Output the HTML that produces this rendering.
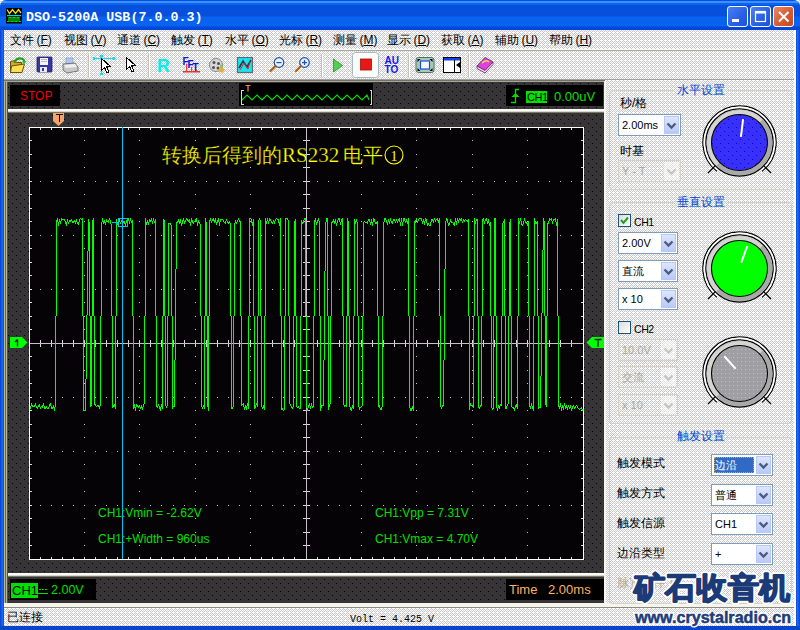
<!DOCTYPE html>
<html><head><meta charset="utf-8">
<style>
*{margin:0;padding:0;box-sizing:border-box}
html,body{width:800px;height:630px;overflow:hidden;background:#ebe8d6;font-family:"Liberation Sans",sans-serif;position:relative}
.a{position:absolute;white-space:nowrap}
svg{position:absolute;left:0;top:0}
#title{left:0;top:0;width:800px;height:30px;background:linear-gradient(#0a50e0 0px,#0a50e0 1px,#3c90ff 1px,#3c90ff 3px,#0a64f0 3px,#0a64f0 5px,#0650dc 5px,#0650dc 16px,#0a62f0 17px,#0a62f0 26px,#0446d8 27px,#0446d8 30px);border-radius:6px 6px 0 0}
.tt{font-family:"Liberation Mono",monospace;font-weight:bold;color:#fff;font-size:13.3px;left:26px;top:10px;letter-spacing:0.05px}
.wb{top:6px;width:21px;height:21px;border:1px solid #fff;border-radius:3px;background:linear-gradient(135deg,#4a80f0,#2a62e6 55%,#1c50d8)}
.menu{top:32px;font-size:12px;color:#000}
.menu u{text-underline-offset:1px}
.lbl{font-size:12px;color:#000}
.gtitle{font-size:12px;color:#0046d5}
.gbox{border:1px solid #d0d0bf;border-radius:5px}
.combo{background:#fff;border:1px solid #7f9db9}
.combo .bt{position:absolute;right:1px;top:1px;bottom:1px;width:15px;background:linear-gradient(#dde6fe,#b9c9f8);border:1px solid #b8c8f4}
.combo .tx{position:absolute;left:3px;top:4px;font-size:11px;color:#000}
.dis{border:1px solid #d4d2c6;background:transparent}
.dis .tx{color:#aca899}
.dis .bt{background:rgba(255,255,255,0.5);border-color:transparent}
.lbl2{font-size:10.5px;color:#000;letter-spacing:-0.4px;margin-top:1.5px}
.chk{width:13px;height:13px;border:1px solid #1c5180;background:linear-gradient(135deg,#dcdcd7,#fff)}
.chk svg{position:absolute;left:0;top:0}
.chv{position:absolute;left:-1px;top:0}
.dis .chv path{stroke:#c8c6bc}
.xchev{position:absolute;left:3px;top:6px;width:7px;height:7px;border-right:2px solid #4d6185;border-bottom:2px solid #4d6185;transform:rotate(45deg) scale(0.8);transform-origin:50% 50%;top:3px}
.sel{position:absolute;left:2px;top:2px;width:40px;height:16px;background:#316ac5;outline:1px dotted #f0a030;outline-offset:-1px}
.wm{font-size:31px;font-weight:900;color:#1a3a78;letter-spacing:0px;text-shadow:1px 1px 0 #fff,-1px -1px 0 #fff,1px -1px 0 #fff,-1px 1px 0 #fff}
.wm2{font-size:17px;font-weight:bold;color:#1e3c78;text-shadow:1px 1px 0 #fff,-1px -1px 0 #fff,1px -1px 0 #fff,-1px 1px 0 #fff}
</style></head><body>
<svg width="800" height="630" viewBox="0 0 800 630" shape-rendering="crispEdges">
<defs><pattern id="bz" patternUnits="userSpaceOnUse" width="4" height="4">
<rect width="4" height="4" fill="#ffffc4"/>
<rect x="0" y="0" width="1" height="1" fill="#fff"/><rect x="2" y="0" width="1" height="1" fill="#fff"/><rect x="3" y="0" width="1" height="1" fill="#c6c6c6"/>
<rect x="0" y="1" width="1" height="1" fill="#c6c6c6"/><rect x="2" y="1" width="1" height="1" fill="#c6c6c6"/>
<rect x="0" y="2" width="1" height="1" fill="#fff"/><rect x="1" y="2" width="1" height="1" fill="#c6c6c6"/><rect x="2" y="2" width="1" height="1" fill="#fff"/><rect x="3" y="2" width="1" height="1" fill="#ffc6c6"/>
<rect x="0" y="3" width="1" height="1" fill="#c6c6c6"/><rect x="2" y="3" width="1" height="1" fill="#c6c6c6"/>
</pattern></defs>
<rect width="800" height="630" fill="url(#bz)"/>
</svg>
<div id="title" class="a"></div>
<div class="a tt">DSO-5200A USB(7.0.0.3)</div>
<div class="a wb" style="left:727px"></div>
<div class="a wb" style="left:750px"></div>
<div class="a wb" style="left:773px;background:linear-gradient(135deg,#e88a68,#d85a30 55%,#c44820)"></div>
<svg width="800" height="32" viewBox="0 0 800 32">
<rect x="732" y="19" width="7" height="3" fill="#fff"/>
<rect x="755.5" y="11.5" width="10" height="10" fill="none" stroke="#fff" stroke-width="1.2"/><rect x="755" y="11" width="11" height="2.5" fill="#fff"/>
<path d="M779,12 L788.5,21.5 M788.5,12 L779,21.5" stroke="#fff" stroke-width="2"/>
<rect x="6" y="8" width="16" height="15.5" fill="#000"/>
<path d="M7,9.5 L9.5,13.5 L12.5,9.5 L15.5,13.5 L18.5,9.5 L21,13" stroke="#f0e000" stroke-width="1.3" fill="none"/>
<rect x="7" y="15" width="14" height="1.2" fill="#00d8e8"/>
<path d="M7,21.5 H9 V17.5 H11 V21.5 H13 V17.5 H15 V21.5 H17 V17.5 H19 V21.5 H21" stroke="#00e000" stroke-width="1.2" fill="none"/>
</svg>
<div class="a" style="left:0;top:30px;width:4px;height:600px;background:linear-gradient(90deg,#0a3fd0,#1a6af5 60%,#0b4ad8)"></div>
<div class="a" style="left:796px;top:30px;width:4px;height:600px;background:linear-gradient(90deg,#0b4ad8,#1a6af5 40%,#0a3fd0)"></div>
<div class="a" style="left:0;top:626px;width:800px;height:4px;background:#0a44c8"></div>

<!-- menu -->
<div class="a menu" style="left:10px">文件&#8201;(<u>F</u>)</div>
<div class="a menu" style="left:64px">视图&#8201;(<u>V</u>)</div>
<div class="a menu" style="left:117px">通道&#8201;(<u>C</u>)</div>
<div class="a menu" style="left:171px">触发&#8201;(<u>T</u>)</div>
<div class="a menu" style="left:225px">水平&#8201;(<u>O</u>)</div>
<div class="a menu" style="left:279px">光标&#8201;(<u>R</u>)</div>
<div class="a menu" style="left:333px">测量&#8201;(<u>M</u>)</div>
<div class="a menu" style="left:387px">显示&#8201;(<u>D</u>)</div>
<div class="a menu" style="left:441px">获取&#8201;(<u>A</u>)</div>
<div class="a menu" style="left:495px">辅助&#8201;(<u>U</u>)</div>
<div class="a menu" style="left:549px">帮助&#8201;(<u>H</u>)</div>


<!-- toolbar icons -->
<svg width="800" height="630" viewBox="0 0 800 630">
<!-- separators -->
<rect x="88" y="54" width="1" height="23" fill="#c6c3b4"/><rect x="89" y="54" width="1" height="23" fill="#fff"/>
<rect x="148" y="54" width="1" height="23" fill="#c6c3b4"/><rect x="149" y="54" width="1" height="23" fill="#fff"/>
<rect x="321" y="54" width="1" height="23" fill="#c6c3b4"/><rect x="322" y="54" width="1" height="23" fill="#fff"/>
<rect x="408" y="54" width="1" height="23" fill="#c6c3b4"/><rect x="409" y="54" width="1" height="23" fill="#fff"/>
<rect x="468" y="54" width="1" height="23" fill="#c6c3b4"/><rect x="469" y="54" width="1" height="23" fill="#fff"/>
<!-- open -->
<path d="M10.5,61.5 L14.5,60.5 L16.5,62.5 L21.5,62.5 L21.5,71.5 L10.5,72.5 Z" fill="#d8a818" stroke="#5a4008" stroke-width="0.9"/>
<path d="M11.5,66 L24.5,64 L22,72.5 L10.5,72.5 Z" fill="#fce050" stroke="#5a4008" stroke-width="0.9"/>
<path d="M14.5,63 Q16,58 21,58.5 Q24,59 24.5,62" stroke="#20a020" stroke-width="2.2" fill="none"/>
<path d="M22,61.5 L26,61 L24,65 Z" fill="#30c030"/>
<!-- save -->
<rect x="37" y="57" width="15" height="15" rx="1" fill="#3636a0" stroke="#20206a" stroke-width="0.8"/>
<rect x="40" y="58" width="8" height="7" fill="#f4f4f4"/>
<rect x="41" y="59" width="6" height="1" fill="#bbb"/><rect x="41" y="61" width="6" height="1" fill="#bbb"/>
<rect x="40" y="67" width="7" height="5" fill="#e8e8f0"/><rect x="42" y="68" width="2" height="3" fill="#3636a0"/>
<!-- print -->
<path d="M66,58 L73,58 L73,64 L66,64 Z" fill="#b0c8f0" stroke="#7090c0" stroke-width="0.6"/>
<path d="M63,64 L75,63 L78,67 L78,71 L67,73 L63,70 Z" fill="#c8c8c8" stroke="#606060" stroke-width="0.8"/>
<path d="M64,65 L75,64 L77,67 L66,68 Z" fill="#f0f0f0"/>
<!-- cursor with cross -->
<rect x="94" y="58" width="20" height="1" fill="#00e0f0"/><rect x="101" y="55" width="1" height="20" fill="#00e0f0"/>
<rect x="93" y="57" width="2" height="3" fill="#00e0f0"/><rect x="113" y="57" width="2" height="3" fill="#00e0f0"/>
<rect x="100" y="55" width="3" height="2" fill="#00e0f0"/><rect x="100" y="73" width="3" height="2" fill="#00e0f0"/>
<path d="M101.5,58.5 L101.5,70.5 L104.5,67.5 L107,73 L109,72 L106.5,66.5 L110.5,66.5 Z" fill="#fff" stroke="#000" stroke-width="1.1" shape-rendering="crispEdges"/>
<!-- cursor -->
<path d="M126.5,57.5 L126.5,69.5 L129.5,66.5 L132,72 L134,71 L131.5,65.5 L135.5,65.5 Z" fill="#fff" stroke="#000" stroke-width="1.1" shape-rendering="crispEdges"/>
<!-- R -->
<text x="157" y="71.5" font-family="Liberation Sans" font-weight="bold" font-size="17.5" fill="#00f0f0">R</text>
<!-- FFT -->
<text x="182.5" y="64.5" font-family="Liberation Sans" font-weight="bold" font-size="10" fill="#1010e0">F</text>
<text x="187.5" y="68" font-family="Liberation Sans" font-weight="bold" font-size="10" fill="#1010e0">F</text>
<text x="192.5" y="71" font-family="Liberation Sans" font-weight="bold" font-size="10" fill="#1010e0">T</text>
<rect x="183" y="71" width="17" height="1.5" fill="#e03030"/><rect x="186" y="64" width="1.2" height="8" fill="#e04040"/><rect x="191" y="67" width="1.2" height="5" fill="#e04040"/><rect x="196" y="70" width="1.2" height="2" fill="#e04040"/>
<!-- film reel -->
<circle cx="216" cy="65" r="6.5" fill="#d8d8d8" stroke="#707070" stroke-width="0.8"/>
<circle cx="214" cy="62.5" r="1.5" fill="#505050"/><circle cx="218.5" cy="63.5" r="1.5" fill="#505050"/><circle cx="213.5" cy="67.5" r="1.5" fill="#505050"/><circle cx="218" cy="68" r="1.5" fill="#505050"/>
<path d="M220,66 L225,70 L222,73 L218,71 Z" fill="#e0b040"/><path d="M220,64 L223,66 L221,69 Z" fill="#80c060"/>
<!-- chart -->
<rect x="237.5" y="57.5" width="15" height="15" fill="#10e8f0" stroke="#606870" stroke-width="1.2"/>
<path d="M239,68 L243,61 L247,67 L251,60" stroke="#303040" stroke-width="1.6" fill="none"/>
<path d="M240,70 L244,63 L248,69 L250,62" stroke="#e02040" stroke-width="1" fill="none"/>
<!-- zoom out -->
<circle cx="279" cy="62.5" r="4.8" fill="#e8f0ff" stroke="#2050a0" stroke-width="1.2"/>
<rect x="276.5" y="62" width="5" height="1.2" fill="#2050c0"/>
<path d="M275.5,66 L270.5,71" stroke="#b06010" stroke-width="2.2" stroke-linecap="round"/>
<!-- zoom in -->
<circle cx="304.5" cy="62.5" r="4.8" fill="#e8f0ff" stroke="#2050a0" stroke-width="1.2"/>
<rect x="302" y="62" width="5" height="1.2" fill="#2050c0"/><rect x="303.9" y="60" width="1.2" height="5" fill="#2050c0"/>
<path d="M301,66 L296,71" stroke="#b06010" stroke-width="2.2" stroke-linecap="round"/>
<!-- play -->
<path d="M333.5,59 L342.5,65.5 L333.5,72 Z" fill="#50d050" stroke="#309030" stroke-width="0.8"/>
<!-- stop pressed -->
<rect x="352.5" y="52.5" width="26" height="25" rx="3" fill="#fbfbf8" stroke="#a8b8c8" stroke-width="1"/>
<rect x="360.5" y="59" width="11" height="11" fill="#e81818" stroke="#a01010" stroke-width="0.8"/>
<!-- AUTO -->
<text x="384.5" y="64" font-family="Liberation Sans" font-weight="bold" font-size="10" fill="#1818e8" letter-spacing="0">AU</text>
<text x="384.5" y="72.5" font-family="Liberation Sans" font-weight="bold" font-size="10" fill="#1818e8">TO</text>
<!-- screen -->
<rect x="416" y="57.5" width="18" height="15" rx="2.5" fill="#a8c8b8" stroke="#507060" stroke-width="1"/>
<rect x="420.5" y="61" width="9" height="8" fill="#f8f8f8" stroke="#1850e0" stroke-width="1.2"/>
<path d="M417.5,59 h3 l-3,3z M432.5,59 h-3 l3,3z M417.5,71 h3 l-3,-3z M432.5,71 h-3 l3,-3z" fill="#000"/>
<!-- window -->
<rect x="443.5" y="57.5" width="17" height="15" fill="#fff" stroke="#000" stroke-width="1"/>
<rect x="444" y="58" width="16" height="2.5" fill="#1840e0"/>
<rect x="454" y="60" width="1" height="12" fill="#000"/>
<path d="M460,62 L456,65 L460,68 Z" fill="#000"/>
<!-- book -->
<path d="M477,66 L485,57.5 L493,62 L485,70.5 Z" fill="#e040e0" stroke="#602060" stroke-width="0.8"/>
<path d="M477,66 L477,68.5 L485,73 L493,64.5 L493,62 L485,70.5 Z" fill="#f8d8f8" stroke="#602060" stroke-width="0.8"/>
<path d="M482,63 Q486,59 489,62" stroke="#f0e040" stroke-width="1.5" fill="none"/>
</svg>

<svg width="800" height="630" viewBox="0 0 800 630" shape-rendering="crispEdges">
<defs>
<pattern id="dk" patternUnits="userSpaceOnUse" width="8" height="8">
<rect width="8" height="8" fill="#363436"/>
<rect x="0" y="7" width="1" height="1" fill="#000"/>
<rect x="4" y="3" width="1" height="1" fill="#000"/>
</pattern>
</defs>
<!-- menu/toolbar separators -->
<rect x="4" y="49" width="792" height="1" fill="#fafaf6"/>
<rect x="4" y="50" width="792" height="1" fill="#a8a8a0"/>
<rect x="4" y="79" width="792" height="1" fill="#a0a09c"/>
<rect x="4" y="80" width="601" height="1" fill="#707064"/>
<!-- dark panel frame -->
<rect x="4" y="81" width="1" height="522" fill="#b4b490"/><rect x="5" y="81" width="1" height="522" fill="#686868"/><rect x="6" y="81" width="1" height="522" fill="#b4b490"/><rect x="7" y="81" width="1" height="522" fill="#505050"/><rect x="4" y="81" width="600" height="1" fill="#a8a89a"/>
<rect x="4" y="603" width="792" height="4" fill="#f6f6ee"/><rect x="4" y="607" width="792" height="1" fill="#8a8a80"/>
<rect x="8" y="82" width="596" height="27" fill="url(#dk)"/>
<rect x="8" y="109" width="596" height="2" fill="#fafaf6"/><rect x="8" y="111" width="596" height="1" fill="#d8d8d0"/><rect x="8" y="112" width="596" height="1" fill="#7a7660"/>
<rect x="8" y="113" width="596" height="460" fill="url(#dk)"/>
<rect x="8" y="573" width="596" height="2" fill="#fafaf6"/><rect x="8" y="575" width="596" height="1" fill="#d8d8d0"/><rect x="8" y="576" width="596" height="1" fill="#7a7660"/>
<rect x="8" y="577" width="596" height="26" fill="url(#dk)"/>
<rect x="604" y="81" width="2" height="522" fill="#f6f6f0"/><rect x="794" y="30" width="2" height="596" fill="#fcfcf8"/>
<!-- top bar boxes -->
<rect x="10" y="85" width="50" height="21" fill="#000"/>
<rect x="239" y="83" width="134" height="23" fill="#000"/>
<rect x="506" y="85" width="97" height="21" fill="#000"/>
<rect x="526" y="91" width="21" height="12" fill="#00e000"/>
<!-- screen -->
<rect x="29" y="127" width="555" height="433" fill="#050305"/>
<path d="M139,316h1v1h-1zM195,235h1v1h-1zM206,235h1v1h-1zM139,154h1v1h-1zM195,491h1v1h-1zM505,397h1v1h-1zM516,397h1v1h-1zM139,410h1v1h-1zM438,505h1v1h-1zM139,181h1v1h-1zM361,532h1v1h-1zM117,181h1v1h-1zM128,181h1v1h-1zM283,451h1v1h-1zM294,451h1v1h-1zM139,437h1v1h-1zM51,235h1v1h-1zM195,356h1v1h-1zM139,275h1v1h-1zM361,397h1v1h-1zM505,289h1v1h-1zM516,289h1v1h-1zM139,302h1v1h-1zM195,221h1v1h-1zM217,505h1v1h-1zM438,235h1v1h-1zM361,262h1v1h-1zM283,181h1v1h-1zM294,181h1v1h-1zM139,167h1v1h-1zM361,518h1v1h-1zM361,383h1v1h-1zM527,424h1v1h-1zM217,235h1v1h-1zM372,505h1v1h-1zM383,505h1v1h-1zM361,248h1v1h-1zM527,289h1v1h-1zM450,451h1v1h-1zM461,451h1v1h-1zM527,545h1v1h-1zM228,505h1v1h-1zM239,505h1v1h-1zM450,289h1v1h-1zM461,289h1v1h-1zM372,397h1v1h-1zM383,397h1v1h-1zM527,154h1v1h-1zM150,451h1v1h-1zM161,451h1v1h-1zM527,410h1v1h-1zM372,235h1v1h-1zM383,235h1v1h-1zM306,451h1v1h-1zM150,289h1v1h-1zM161,289h1v1h-1zM306,289h1v1h-1zM450,181h1v1h-1zM461,181h1v1h-1zM527,275h1v1h-1zM228,235h1v1h-1zM239,235h1v1h-1zM538,397h1v1h-1zM549,397h1v1h-1zM150,181h1v1h-1zM161,181h1v1h-1zM527,140h1v1h-1zM306,181h1v1h-1zM394,397h1v1h-1zM538,289h1v1h-1zM549,289h1v1h-1zM250,478h1v1h-1zM250,505h1v1h-1zM250,343h1v1h-1zM84,478h1v1h-1zM250,370h1v1h-1zM173,397h1v1h-1zM317,289h1v1h-1zM250,208h1v1h-1zM84,343h1v1h-1zM250,235h1v1h-1zM416,505h1v1h-1zM405,505h1v1h-1zM250,491h1v1h-1zM173,289h1v1h-1zM416,532h1v1h-1zM84,208h1v1h-1zM472,451h1v1h-1zM483,451h1v1h-1zM494,451h1v1h-1zM84,464h1v1h-1zM416,370h1v1h-1zM250,356h1v1h-1zM261,505h1v1h-1zM416,397h1v1h-1zM405,397h1v1h-1zM472,316h1v1h-1zM84,329h1v1h-1zM416,235h1v1h-1zM405,235h1v1h-1zM328,451h1v1h-1zM339,451h1v1h-1zM250,221h1v1h-1zM416,262h1v1h-1zM328,289h1v1h-1zM339,289h1v1h-1zM261,397h1v1h-1zM483,181h1v1h-1zM494,181h1v1h-1zM416,518h1v1h-1zM84,194h1v1h-1zM472,181h1v1h-1zM40,505h1v1h-1zM472,437h1v1h-1zM261,235h1v1h-1zM184,397h1v1h-1zM560,397h1v1h-1zM416,383h1v1h-1zM328,181h1v1h-1zM339,181h1v1h-1zM472,302h1v1h-1zM40,397h1v1h-1zM416,248h1v1h-1zM427,397h1v1h-1zM40,235h1v1h-1zM472,167h1v1h-1zM560,289h1v1h-1zM571,289h1v1h-1zM272,505h1v1h-1zM195,532h1v1h-1zM427,289h1v1h-1zM139,478h1v1h-1zM195,397h1v1h-1zM206,397h1v1h-1zM139,505h1v1h-1zM117,505h1v1h-1zM128,505h1v1h-1zM350,289h1v1h-1zM195,424h1v1h-1zM139,343h1v1h-1zM272,235h1v1h-1zM195,262h1v1h-1zM139,370h1v1h-1zM51,397h1v1h-1zM195,518h1v1h-1zM195,289h1v1h-1zM206,289h1v1h-1zM139,208h1v1h-1zM195,545h1v1h-1zM505,451h1v1h-1zM516,451h1v1h-1zM139,464h1v1h-1zM139,235h1v1h-1zM117,235h1v1h-1zM128,235h1v1h-1zM195,383h1v1h-1zM283,505h1v1h-1zM294,505h1v1h-1zM195,154h1v1h-1zM139,491h1v1h-1zM438,397h1v1h-1zM361,424h1v1h-1zM195,410h1v1h-1zM139,329h1v1h-1zM361,451h1v1h-1zM195,248h1v1h-1zM139,356h1v1h-1zM361,289h1v1h-1zM195,275h1v1h-1zM283,397h1v1h-1zM294,397h1v1h-1zM505,181h1v1h-1zM516,181h1v1h-1zM139,194h1v1h-1zM361,545h1v1h-1zM361,316h1v1h-1zM62,505h1v1h-1zM73,505h1v1h-1zM283,235h1v1h-1zM294,235h1v1h-1zM139,221h1v1h-1zM217,397h1v1h-1zM361,154h1v1h-1zM195,140h1v1h-1zM361,410h1v1h-1zM361,181h1v1h-1zM527,451h1v1h-1zM361,437h1v1h-1zM62,397h1v1h-1zM73,397h1v1h-1zM527,478h1v1h-1zM361,275h1v1h-1zM62,235h1v1h-1zM73,235h1v1h-1zM527,316h1v1h-1zM361,302h1v1h-1zM527,343h1v1h-1zM450,505h1v1h-1zM361,140h1v1h-1zM461,505h1v1h-1zM527,181h1v1h-1zM361,167h1v1h-1zM372,451h1v1h-1zM383,451h1v1h-1zM527,437h1v1h-1zM527,208h1v1h-1zM228,397h1v1h-1zM239,397h1v1h-1zM150,505h1v1h-1zM161,505h1v1h-1zM527,464h1v1h-1zM372,289h1v1h-1zM383,289h1v1h-1zM527,302h1v1h-1zM450,235h1v1h-1zM461,235h1v1h-1zM527,329h1v1h-1zM228,289h1v1h-1zM239,289h1v1h-1zM372,181h1v1h-1zM383,181h1v1h-1zM527,167h1v1h-1zM538,451h1v1h-1zM549,451h1v1h-1zM150,235h1v1h-1zM161,235h1v1h-1zM527,194h1v1h-1zM394,451h1v1h-1zM250,532h1v1h-1zM394,289h1v1h-1zM317,451h1v1h-1zM538,181h1v1h-1zM549,181h1v1h-1zM84,505h1v1h-1zM95,505h1v1h-1zM106,505h1v1h-1zM250,397h1v1h-1zM84,532h1v1h-1zM250,424h1v1h-1zM173,451h1v1h-1zM394,181h1v1h-1zM84,370h1v1h-1zM250,262h1v1h-1zM84,397h1v1h-1zM95,397h1v1h-1zM106,397h1v1h-1zM317,181h1v1h-1zM250,518h1v1h-1zM250,289h1v1h-1zM84,235h1v1h-1zM95,235h1v1h-1zM106,235h1v1h-1zM250,545h1v1h-1zM472,478h1v1h-1zM84,491h1v1h-1zM84,262h1v1h-1zM250,383h1v1h-1zM250,154h1v1h-1zM472,505h1v1h-1zM173,181h1v1h-1zM483,505h1v1h-1zM84,518h1v1h-1zM494,505h1v1h-1zM416,424h1v1h-1zM250,410h1v1h-1zM472,343h1v1h-1zM84,356h1v1h-1zM416,451h1v1h-1zM405,451h1v1h-1zM250,248h1v1h-1zM472,370h1v1h-1zM84,383h1v1h-1zM416,289h1v1h-1zM405,289h1v1h-1zM250,275h1v1h-1zM472,208h1v1h-1zM416,545h1v1h-1zM84,221h1v1h-1zM416,316h1v1h-1zM472,464h1v1h-1zM472,235h1v1h-1zM483,235h1v1h-1zM494,235h1v1h-1zM84,248h1v1h-1zM416,154h1v1h-1zM250,140h1v1h-1zM472,491h1v1h-1zM261,289h1v1h-1zM416,410h1v1h-1zM184,451h1v1h-1zM416,181h1v1h-1zM405,181h1v1h-1zM472,329h1v1h-1zM560,451h1v1h-1zM571,451h1v1h-1zM416,437h1v1h-1zM184,289h1v1h-1zM472,356h1v1h-1zM416,275h1v1h-1zM472,194h1v1h-1zM416,302h1v1h-1zM427,451h1v1h-1zM40,289h1v1h-1zM472,221h1v1h-1zM416,140h1v1h-1zM184,181h1v1h-1zM350,451h1v1h-1zM560,181h1v1h-1zM571,181h1v1h-1zM416,167h1v1h-1zM272,397h1v1h-1zM139,532h1v1h-1zM195,451h1v1h-1zM206,451h1v1h-1zM427,181h1v1h-1zM139,397h1v1h-1zM117,397h1v1h-1zM128,397h1v1h-1zM350,181h1v1h-1zM272,289h1v1h-1zM195,316h1v1h-1zM51,451h1v1h-1zM139,262h1v1h-1zM51,289h1v1h-1zM505,505h1v1h-1zM195,181h1v1h-1zM206,181h1v1h-1zM139,518h1v1h-1zM516,505h1v1h-1zM195,437h1v1h-1zM438,451h1v1h-1zM361,478h1v1h-1zM195,464h1v1h-1zM139,383h1v1h-1zM361,505h1v1h-1zM51,181h1v1h-1zM438,289h1v1h-1zM195,302h1v1h-1zM361,343h1v1h-1zM195,329h1v1h-1zM505,235h1v1h-1zM516,235h1v1h-1zM139,248h1v1h-1zM361,370h1v1h-1zM195,167h1v1h-1zM283,289h1v1h-1zM294,289h1v1h-1zM217,451h1v1h-1zM438,181h1v1h-1zM361,208h1v1h-1zM195,194h1v1h-1zM361,464h1v1h-1zM217,289h1v1h-1zM361,235h1v1h-1zM527,505h1v1h-1zM139,140h1v1h-1zM361,491h1v1h-1zM62,451h1v1h-1zM73,451h1v1h-1zM527,532h1v1h-1zM361,329h1v1h-1zM62,289h1v1h-1zM73,289h1v1h-1zM527,370h1v1h-1zM217,181h1v1h-1zM361,356h1v1h-1zM527,397h1v1h-1zM361,194h1v1h-1zM306,505h1v1h-1zM527,235h1v1h-1zM361,221h1v1h-1zM450,397h1v1h-1zM461,397h1v1h-1zM62,181h1v1h-1zM527,491h1v1h-1zM73,181h1v1h-1zM527,262h1v1h-1zM228,451h1v1h-1zM239,451h1v1h-1zM527,518h1v1h-1zM150,397h1v1h-1zM161,397h1v1h-1zM527,356h1v1h-1zM306,397h1v1h-1zM527,383h1v1h-1zM306,235h1v1h-1zM527,221h1v1h-1zM538,505h1v1h-1zM228,181h1v1h-1zM239,181h1v1h-1zM549,505h1v1h-1zM527,248h1v1h-1zM394,505h1v1h-1zM317,505h1v1h-1zM538,235h1v1h-1zM549,235h1v1h-1zM250,451h1v1h-1zM173,505h1v1h-1zM394,235h1v1h-1zM84,424h1v1h-1zM317,397h1v1h-1zM250,316h1v1h-1zM84,451h1v1h-1zM95,451h1v1h-1zM106,451h1v1h-1zM317,235h1v1h-1zM84,289h1v1h-1zM95,289h1v1h-1zM106,289h1v1h-1zM250,181h1v1h-1zM472,532h1v1h-1zM84,545h1v1h-1zM84,316h1v1h-1zM250,437h1v1h-1zM173,235h1v1h-1zM416,478h1v1h-1zM84,154h1v1h-1zM328,505h1v1h-1zM339,505h1v1h-1zM250,464h1v1h-1zM472,397h1v1h-1zM483,397h1v1h-1zM494,397h1v1h-1zM84,410h1v1h-1zM84,181h1v1h-1zM95,181h1v1h-1zM106,181h1v1h-1zM250,302h1v1h-1zM261,451h1v1h-1zM472,424h1v1h-1zM84,437h1v1h-1zM416,343h1v1h-1zM250,329h1v1h-1zM472,262h1v1h-1zM84,275h1v1h-1zM328,397h1v1h-1zM339,397h1v1h-1zM250,167h1v1h-1zM472,518h1v1h-1zM472,289h1v1h-1zM483,289h1v1h-1zM494,289h1v1h-1zM84,302h1v1h-1zM416,208h1v1h-1zM328,235h1v1h-1zM339,235h1v1h-1zM250,194h1v1h-1zM472,545h1v1h-1zM416,464h1v1h-1zM84,140h1v1h-1zM184,505h1v1h-1zM40,451h1v1h-1zM472,383h1v1h-1zM560,505h1v1h-1zM261,181h1v1h-1zM472,154h1v1h-1zM571,505h1v1h-1zM416,491h1v1h-1zM84,167h1v1h-1zM472,410h1v1h-1zM416,329h1v1h-1zM472,248h1v1h-1zM416,356h1v1h-1zM427,505h1v1h-1zM472,275h1v1h-1zM571,397h1v1h-1zM416,194h1v1h-1zM184,235h1v1h-1zM350,505h1v1h-1zM40,181h1v1h-1zM560,235h1v1h-1zM571,235h1v1h-1zM416,221h1v1h-1zM472,140h1v1h-1zM272,451h1v1h-1zM195,478h1v1h-1zM195,505h1v1h-1zM206,505h1v1h-1zM427,235h1v1h-1zM139,424h1v1h-1zM350,397h1v1h-1zM195,343h1v1h-1zM139,451h1v1h-1zM117,451h1v1h-1zM128,451h1v1h-1zM350,235h1v1h-1zM195,370h1v1h-1zM139,289h1v1h-1zM117,289h1v1h-1zM128,289h1v1h-1zM51,505h1v1h-1zM272,181h1v1h-1zM195,208h1v1h-1zM139,545h1v1h-1z" fill="#c8c8c8"/>
<path d="M40.5,128v2M40.5,559v-2M51.5,128v2M51.5,559v-2M62.5,128v2M62.5,559v-2M73.5,128v2M73.5,559v-2M84.5,128v2M84.5,559v-2M95.5,128v2M95.5,559v-2M106.5,128v2M106.5,559v-2M117.5,128v2M117.5,559v-2M128.5,128v2M128.5,559v-2M139.5,128v2M139.5,559v-2M150.5,128v2M150.5,559v-2M161.5,128v2M161.5,559v-2M173.5,128v2M173.5,559v-2M184.5,128v2M184.5,559v-2M195.5,128v2M195.5,559v-2M206.5,128v2M206.5,559v-2M217.5,128v2M217.5,559v-2M228.5,128v2M228.5,559v-2M239.5,128v2M239.5,559v-2M250.5,128v2M250.5,559v-2M261.5,128v2M261.5,559v-2M272.5,128v2M272.5,559v-2M283.5,128v2M283.5,559v-2M294.5,128v2M294.5,559v-2M306.5,128v2M306.5,559v-2M317.5,128v2M317.5,559v-2M328.5,128v2M328.5,559v-2M339.5,128v2M339.5,559v-2M350.5,128v2M350.5,559v-2M361.5,128v2M361.5,559v-2M372.5,128v2M372.5,559v-2M383.5,128v2M383.5,559v-2M394.5,128v2M394.5,559v-2M405.5,128v2M405.5,559v-2M416.5,128v2M416.5,559v-2M427.5,128v2M427.5,559v-2M438.5,128v2M438.5,559v-2M450.5,128v2M450.5,559v-2M461.5,128v2M461.5,559v-2M472.5,128v2M472.5,559v-2M483.5,128v2M483.5,559v-2M494.5,128v2M494.5,559v-2M505.5,128v2M505.5,559v-2M516.5,128v2M516.5,559v-2M527.5,128v2M527.5,559v-2M538.5,128v2M538.5,559v-2M549.5,128v2M549.5,559v-2M560.5,128v2M560.5,559v-2M571.5,128v2M571.5,559v-2M30,140.5h2M583,140.5h-2M30,154.5h2M583,154.5h-2M30,167.5h2M583,167.5h-2M30,181.5h2M583,181.5h-2M30,194.5h2M583,194.5h-2M30,208.5h2M583,208.5h-2M30,221.5h2M583,221.5h-2M30,235.5h2M583,235.5h-2M30,248.5h2M583,248.5h-2M30,262.5h2M583,262.5h-2M30,275.5h2M583,275.5h-2M30,289.5h2M583,289.5h-2M30,302.5h2M583,302.5h-2M30,316.5h2M583,316.5h-2M30,329.5h2M583,329.5h-2M30,343.5h2M583,343.5h-2M30,356.5h2M583,356.5h-2M30,370.5h2M583,370.5h-2M30,383.5h2M583,383.5h-2M30,397.5h2M583,397.5h-2M30,410.5h2M583,410.5h-2M30,424.5h2M583,424.5h-2M30,437.5h2M583,437.5h-2M30,451.5h2M583,451.5h-2M30,464.5h2M583,464.5h-2M30,478.5h2M583,478.5h-2M30,491.5h2M583,491.5h-2M30,505.5h2M583,505.5h-2M30,518.5h2M583,518.5h-2M30,532.5h2M583,532.5h-2M30,545.5h2M583,545.5h-2M40.5,340v7M51.5,340v7M62.5,340v7M73.5,340v7M84.5,340v7M95.5,340v7M106.5,340v7M117.5,340v7M128.5,340v7M139.5,340v7M150.5,340v7M161.5,340v7M173.5,340v7M184.5,340v7M195.5,340v7M206.5,340v7M217.5,340v7M228.5,340v7M239.5,340v7M250.5,340v7M261.5,340v7M272.5,340v7M283.5,340v7M294.5,340v7M306.5,340v7M317.5,340v7M328.5,340v7M339.5,340v7M350.5,340v7M361.5,340v7M372.5,340v7M383.5,340v7M394.5,340v7M405.5,340v7M416.5,340v7M427.5,340v7M438.5,340v7M450.5,340v7M461.5,340v7M472.5,340v7M483.5,340v7M494.5,340v7M505.5,340v7M516.5,340v7M527.5,340v7M538.5,340v7M549.5,340v7M560.5,340v7M571.5,340v7M303,140.5h7M303,154.5h7M303,167.5h7M303,181.5h7M303,194.5h7M303,208.5h7M303,221.5h7M303,235.5h7M303,248.5h7M303,262.5h7M303,275.5h7M303,289.5h7M303,302.5h7M303,316.5h7M303,329.5h7M303,343.5h7M303,356.5h7M303,370.5h7M303,383.5h7M303,397.5h7M303,410.5h7M303,424.5h7M303,437.5h7M303,451.5h7M303,464.5h7M303,478.5h7M303,491.5h7M303,505.5h7M303,518.5h7M303,532.5h7M303,545.5h7" stroke="#d8d8d8" stroke-width="1" fill="none"/>
<rect x="29" y="343" width="555" height="1" fill="#c8c0c8"/>
<rect x="306" y="127" width="1" height="433" fill="#c8c0c8"/>
<rect x="29.5" y="127.5" width="554" height="432" fill="none" stroke="#fff"/>
<!-- bottom bar boxes -->
<rect x="10" y="579" width="86" height="21" fill="#000"/>
<rect x="11" y="583" width="27" height="15" fill="#00e000"/>
<rect x="506" y="579" width="98" height="21" fill="#000"/>
</svg>

<svg width="800" height="630" viewBox="0 0 800 630">
<path d="M30,406h1v3h-1zM31,403h1v3h-1zM32,405h1v2h-1zM33,406h1v1h-1zM34,405h1v2h-1zM35,403h1v3h-1zM36,406h1v2h-1zM37,407h1v2h-1zM38,405h1v2h-1zM39,404h1v3h-1zM40,407h1v2h-1zM41,406h1v1h-1zM42,405h1v3h-1zM43,403h1v3h-1zM44,406h1v3h-1zM45,407h1v2h-1zM46,406h1v2h-1zM47,408h1v1h-1zM48,407h1v2h-1zM49,404h1v3h-1zM50,403h1v3h-1zM51,406h1v3h-1zM52,407h1v2h-1zM53,405h1v3h-1zM54,407h1v4h-1zM55,316h1v91h-1zM56,220h1v96h-1zM57,218h1v4h-1zM58,222h1v4h-1zM59,219h1v3h-1zM60,221h1v3h-1zM61,218h1v3h-1zM62,219h1v1h-1zM63,219h1v1h-1zM64,219h1v2h-1zM65,221h1v3h-1zM66,222h1v4h-1zM67,219h1v3h-1zM68,222h1v2h-1zM69,220h1v2h-1zM70,220h1v2h-1zM71,219h1v2h-1zM72,221h1v2h-1zM73,221h1v2h-1zM74,220h1v2h-1zM75,221h1v3h-1zM76,219h1v3h-1zM77,222h1v2h-1zM78,222h1v3h-1zM79,219h1v3h-1zM80,218h1v1h-1zM81,219h1v1h-1zM82,218h1v98h-1zM83,316h1v95h-1zM84,410h1v1h-1zM85,379h1v32h-1zM86,315h1v64h-1zM87,251h1v64h-1zM88,219h1v32h-1zM89,222h1v94h-1zM90,316h1v91h-1zM91,316h1v90h-1zM92,220h1v96h-1zM93,218h1v98h-1zM94,316h1v89h-1zM95,404h1v2h-1zM96,406h1v1h-1zM97,405h1v1h-1zM98,405h1v2h-1zM99,406h1v3h-1zM100,316h1v90h-1zM101,222h1v94h-1zM102,218h1v4h-1zM103,221h1v3h-1zM104,220h1v3h-1zM105,222h1v3h-1zM106,219h1v3h-1zM107,221h1v1h-1zM108,220h1v3h-1zM109,218h1v2h-1zM110,220h1v4h-1zM111,224h1v92h-1zM112,316h1v92h-1zM113,405h1v2h-1zM114,404h1v3h-1zM115,316h1v93h-1zM116,219h1v97h-1zM117,222h1v3h-1zM118,221h1v3h-1zM119,219h1v3h-1zM120,222h1v2h-1zM121,220h1v2h-1zM122,219h1v2h-1zM123,221h1v2h-1zM124,221h1v3h-1zM125,223h1v3h-1zM126,220h1v3h-1zM127,221h1v3h-1zM128,218h1v3h-1zM129,221h1v3h-1zM130,218h1v3h-1zM131,221h1v2h-1zM132,220h1v96h-1zM133,316h1v93h-1zM134,404h1v4h-1zM135,407h1v4h-1zM136,404h1v3h-1zM137,405h1v2h-1zM138,406h1v2h-1zM139,405h1v2h-1zM140,407h1v2h-1zM141,405h1v3h-1zM142,407h1v3h-1zM143,404h1v3h-1zM144,316h1v88h-1zM145,218h1v98h-1zM146,222h1v3h-1zM147,220h1v3h-1zM148,222h1v3h-1zM149,219h1v3h-1zM150,220h1v2h-1zM151,218h1v3h-1zM152,221h1v3h-1zM153,218h1v3h-1zM154,221h1v2h-1zM155,219h1v97h-1zM156,316h1v91h-1zM157,406h1v2h-1zM158,404h1v2h-1zM159,406h1v3h-1zM160,407h1v4h-1zM161,404h1v3h-1zM162,316h1v93h-1zM163,219h1v97h-1zM164,220h1v96h-1zM165,316h1v90h-1zM166,406h1v2h-1zM167,316h1v90h-1zM168,223h1v93h-1zM169,223h1v1h-1zM170,223h1v2h-1zM171,225h1v91h-1zM172,316h1v93h-1zM173,406h1v1h-1zM174,360h1v47h-1zM175,269h1v91h-1zM176,222h1v47h-1zM177,221h1v2h-1zM178,219h1v3h-1zM179,221h1v3h-1zM180,219h1v4h-1zM181,223h1v3h-1zM182,220h1v4h-1zM183,218h1v3h-1zM184,221h1v3h-1zM185,220h1v2h-1zM186,218h1v2h-1zM187,219h1v2h-1zM188,220h1v2h-1zM189,219h1v4h-1zM190,222h1v4h-1zM191,218h1v4h-1zM192,220h1v3h-1zM193,222h1v2h-1zM194,221h1v1h-1zM195,219h1v2h-1zM196,218h1v4h-1zM197,222h1v4h-1zM198,220h1v3h-1zM199,222h1v2h-1zM200,224h1v92h-1zM201,316h1v91h-1zM202,407h1v2h-1zM203,405h1v2h-1zM204,316h1v93h-1zM205,218h1v98h-1zM206,222h1v94h-1zM207,316h1v91h-1zM208,316h1v95h-1zM209,220h1v96h-1zM210,218h1v3h-1zM211,221h1v2h-1zM212,219h1v2h-1zM213,218h1v3h-1zM214,220h1v3h-1zM215,218h1v4h-1zM216,222h1v3h-1zM217,220h1v3h-1zM218,218h1v4h-1zM219,222h1v4h-1zM220,219h1v3h-1zM221,219h1v1h-1zM222,219h1v1h-1zM223,220h1v2h-1zM224,222h1v1h-1zM225,221h1v3h-1zM226,219h1v2h-1zM227,221h1v2h-1zM228,222h1v2h-1zM229,221h1v2h-1zM230,223h1v93h-1zM231,316h1v93h-1zM232,407h1v2h-1zM233,316h1v91h-1zM234,223h1v93h-1zM235,220h1v3h-1zM236,222h1v2h-1zM237,220h1v2h-1zM238,218h1v2h-1zM239,220h1v2h-1zM240,221h1v95h-1zM241,316h1v90h-1zM242,404h1v1h-1zM243,403h1v4h-1zM244,407h1v3h-1zM245,405h1v3h-1zM246,406h1v4h-1zM247,403h1v3h-1zM248,316h1v93h-1zM249,218h1v98h-1zM250,218h1v1h-1zM251,219h1v4h-1zM252,222h1v4h-1zM253,219h1v97h-1zM254,316h1v93h-1zM255,405h1v3h-1zM256,403h1v2h-1zM257,316h1v91h-1zM258,220h1v96h-1zM259,218h1v2h-1zM260,220h1v96h-1zM261,316h1v91h-1zM262,407h1v2h-1zM263,405h1v3h-1zM264,316h1v94h-1zM265,218h1v98h-1zM266,221h1v3h-1zM267,218h1v3h-1zM268,221h1v3h-1zM269,218h1v3h-1zM270,219h1v2h-1zM271,221h1v2h-1zM272,222h1v2h-1zM273,220h1v2h-1zM274,221h1v3h-1zM275,219h1v2h-1zM276,218h1v1h-1zM277,219h1v1h-1zM278,219h1v4h-1zM279,222h1v4h-1zM280,218h1v98h-1zM281,316h1v94h-1zM282,408h1v2h-1zM283,410h1v1h-1zM284,316h1v94h-1zM285,218h1v98h-1zM286,218h1v1h-1zM287,218h1v2h-1zM288,220h1v96h-1zM289,316h1v88h-1zM290,404h1v2h-1zM291,406h1v2h-1zM292,407h1v2h-1zM293,316h1v91h-1zM294,221h1v95h-1zM295,219h1v97h-1zM296,316h1v91h-1zM297,407h1v1h-1zM298,406h1v2h-1zM299,408h1v1h-1zM300,316h1v93h-1zM301,220h1v96h-1zM302,222h1v2h-1zM303,220h1v3h-1zM304,218h1v2h-1zM305,218h1v98h-1zM306,316h1v92h-1zM307,408h1v3h-1zM308,405h1v3h-1zM309,403h1v3h-1zM310,406h1v3h-1zM311,403h1v3h-1zM312,406h1v2h-1zM313,316h1v91h-1zM314,220h1v96h-1zM315,218h1v4h-1zM316,222h1v3h-1zM317,220h1v3h-1zM318,218h1v3h-1zM319,221h1v95h-1zM320,316h1v95h-1zM321,405h1v3h-1zM322,405h1v1h-1zM323,360h1v46h-1zM324,271h1v89h-1zM325,222h1v49h-1zM326,218h1v4h-1zM327,218h1v98h-1zM328,316h1v94h-1zM329,404h1v3h-1zM330,316h1v88h-1zM331,222h1v94h-1zM332,221h1v2h-1zM333,219h1v3h-1zM334,221h1v3h-1zM335,219h1v4h-1zM336,223h1v3h-1zM337,220h1v3h-1zM338,218h1v2h-1zM339,218h1v4h-1zM340,222h1v3h-1zM341,219h1v3h-1zM342,218h1v98h-1zM343,316h1v89h-1zM344,405h1v2h-1zM345,405h1v1h-1zM346,316h1v91h-1zM347,218h1v98h-1zM348,221h1v95h-1zM349,316h1v91h-1zM350,407h1v3h-1zM351,408h1v3h-1zM352,405h1v3h-1zM353,316h1v93h-1zM354,219h1v97h-1zM355,221h1v3h-1zM356,219h1v3h-1zM357,222h1v94h-1zM358,316h1v91h-1zM359,407h1v3h-1zM360,407h1v1h-1zM361,406h1v1h-1zM362,316h1v90h-1zM363,222h1v94h-1zM364,221h1v1h-1zM365,222h1v1h-1zM366,222h1v1h-1zM367,221h1v3h-1zM368,219h1v2h-1zM369,219h1v3h-1zM370,222h1v3h-1zM371,219h1v4h-1zM372,222h1v4h-1zM373,218h1v4h-1zM374,219h1v3h-1zM375,222h1v2h-1zM376,222h1v2h-1zM377,221h1v95h-1zM378,316h1v91h-1zM379,405h1v3h-1zM380,408h1v2h-1zM381,407h1v3h-1zM382,316h1v91h-1zM383,222h1v94h-1zM384,218h1v4h-1zM385,218h1v2h-1zM386,220h1v3h-1zM387,222h1v3h-1zM388,219h1v3h-1zM389,221h1v3h-1zM390,218h1v3h-1zM391,221h1v2h-1zM392,221h1v3h-1zM393,219h1v2h-1zM394,219h1v2h-1zM395,221h1v2h-1zM396,219h1v2h-1zM397,221h1v2h-1zM398,219h1v2h-1zM399,218h1v4h-1zM400,222h1v4h-1zM401,218h1v4h-1zM402,222h1v4h-1zM403,218h1v4h-1zM404,218h1v3h-1zM405,221h1v2h-1zM406,219h1v3h-1zM407,221h1v3h-1zM408,218h1v98h-1zM409,316h1v92h-1zM410,408h1v3h-1zM411,408h1v3h-1zM412,406h1v3h-1zM413,316h1v95h-1zM414,221h1v95h-1zM415,220h1v3h-1zM416,218h1v3h-1zM417,221h1v2h-1zM418,219h1v2h-1zM419,218h1v1h-1zM420,218h1v1h-1zM421,218h1v3h-1zM422,221h1v3h-1zM423,219h1v3h-1zM424,221h1v4h-1zM425,218h1v3h-1zM426,219h1v4h-1zM427,223h1v3h-1zM428,223h1v2h-1zM429,225h1v1h-1zM430,222h1v4h-1zM431,219h1v3h-1zM432,219h1v2h-1zM433,220h1v3h-1zM434,218h1v2h-1zM435,220h1v2h-1zM436,219h1v1h-1zM437,218h1v3h-1zM438,220h1v3h-1zM439,218h1v98h-1zM440,316h1v91h-1zM441,407h1v2h-1zM442,405h1v2h-1zM443,360h1v46h-1zM444,269h1v91h-1zM445,221h1v48h-1zM446,218h1v3h-1zM447,219h1v4h-1zM448,223h1v3h-1zM449,222h1v3h-1zM450,219h1v3h-1zM451,221h1v2h-1zM452,222h1v1h-1zM453,223h1v2h-1zM454,222h1v4h-1zM455,218h1v4h-1zM456,221h1v4h-1zM457,218h1v3h-1zM458,220h1v3h-1zM459,218h1v2h-1zM460,219h1v2h-1zM461,218h1v3h-1zM462,221h1v2h-1zM463,219h1v2h-1zM464,220h1v2h-1zM465,219h1v1h-1zM466,220h1v1h-1zM467,220h1v2h-1zM468,219h1v97h-1zM469,316h1v94h-1zM470,403h1v3h-1zM471,405h1v1h-1zM472,405h1v2h-1zM473,316h1v92h-1zM474,218h1v98h-1zM475,221h1v3h-1zM476,219h1v2h-1zM477,219h1v97h-1zM478,316h1v92h-1zM479,407h1v2h-1zM480,405h1v2h-1zM481,316h1v90h-1zM482,219h1v97h-1zM483,218h1v3h-1zM484,221h1v3h-1zM485,219h1v2h-1zM486,218h1v3h-1zM487,221h1v3h-1zM488,219h1v4h-1zM489,223h1v3h-1zM490,222h1v94h-1zM491,316h1v92h-1zM492,408h1v2h-1zM493,316h1v93h-1zM494,218h1v98h-1zM495,218h1v98h-1zM496,316h1v92h-1zM497,408h1v3h-1zM498,405h1v3h-1zM499,406h1v3h-1zM500,404h1v2h-1zM501,316h1v90h-1zM502,223h1v93h-1zM503,221h1v2h-1zM504,219h1v97h-1zM505,316h1v93h-1zM506,406h1v3h-1zM507,404h1v2h-1zM508,316h1v88h-1zM509,222h1v94h-1zM510,219h1v97h-1zM511,316h1v91h-1zM512,407h1v1h-1zM513,407h1v2h-1zM514,408h1v3h-1zM515,405h1v3h-1zM516,404h1v3h-1zM517,316h1v93h-1zM518,218h1v98h-1zM519,221h1v3h-1zM520,218h1v3h-1zM521,221h1v4h-1zM522,224h1v2h-1zM523,221h1v3h-1zM524,218h1v3h-1zM525,221h1v2h-1zM526,222h1v2h-1zM527,223h1v3h-1zM528,221h1v95h-1zM529,316h1v91h-1zM530,406h1v3h-1zM531,403h1v3h-1zM532,406h1v3h-1zM533,316h1v95h-1zM534,218h1v98h-1zM535,221h1v3h-1zM536,222h1v2h-1zM537,221h1v95h-1zM538,316h1v93h-1zM539,407h1v1h-1zM540,376h1v32h-1zM541,313h1v63h-1zM542,250h1v63h-1zM543,218h1v32h-1zM544,221h1v95h-1zM545,316h1v89h-1zM546,316h1v91h-1zM547,223h1v93h-1zM548,221h1v3h-1zM549,218h1v3h-1zM550,219h1v1h-1zM551,218h1v3h-1zM552,221h1v3h-1zM553,219h1v2h-1zM554,219h1v1h-1zM555,218h1v4h-1zM556,222h1v4h-1zM557,219h1v97h-1zM558,316h1v91h-1zM559,406h1v3h-1zM560,403h1v4h-1zM561,407h1v4h-1zM562,405h1v3h-1zM563,406h1v4h-1zM564,403h1v3h-1zM565,406h1v3h-1zM566,405h1v3h-1zM567,407h1v3h-1zM568,405h1v2h-1zM569,407h1v2h-1zM570,405h1v3h-1zM571,408h1v3h-1zM572,406h1v3h-1zM573,405h1v2h-1zM574,407h1v2h-1zM575,406h1v2h-1zM576,405h1v1h-1zM577,406h1v2h-1zM578,408h1v1h-1zM579,409h1v1h-1zM580,408h1v1h-1zM581,407h1v2h-1zM582,409h1v2h-1z" fill="#00ff00" shape-rendering="crispEdges"/>
<path d="M242,100L247,95L252,100L257,95L262,100L267,95L272,100L277,95L282,100L287,95L292,100L297,95L302,100L307,95L312,100L317,95L322,100L327,95L332,100L337,95L342,100L347,95L352,100L357,95L362,100L367,95L369,100" stroke="#00e000" stroke-width="1.2" fill="none"/>
<!-- cursor -->
<rect x="122" y="127" width="1" height="432" fill="#00c4f4" shape-rendering="crispEdges"/>
<rect x="118.5" y="218.5" width="9" height="8" fill="none" stroke="#00c4f4" shape-rendering="crispEdges"/>
<rect x="112" y="222" width="6" height="1" fill="#00c4f4" shape-rendering="crispEdges"/>
</svg>


<!-- markers & small scope graphics -->
<svg width="800" height="630" viewBox="0 0 800 630">
<path d="M53,113 H64 V121 L58.5,126 L53,121 Z" fill="#f4a468"/>
<path d="M56,114.5 H62.5 M59.5,114.5 V121.5" stroke="#101010" stroke-width="1.2" fill="none" shape-rendering="crispEdges"/>
<path d="M10,337 H22 L27.5,342.5 L22,348 H10 Z" fill="#00ff00"/>
<path d="M604,337 H592 L586.5,342.5 L592,348 H604 Z" fill="#00ff00"/>
<path d="M17.5,339.5 V346.5 M15,342 L17.5,339.5" stroke="#002000" stroke-width="1.4" fill="none"/>
<path d="M594.5,339.5 H601.5 M598,339.5 V347" stroke="#003000" stroke-width="1.5" fill="none"/>
<!-- thumb brackets -->
<path d="M243.5,90.5 H241.5 V104.5 H243.5 M369.5,90.5 H371.5 V104.5 H369.5" stroke="#c8d8f0" stroke-width="1" fill="none" shape-rendering="crispEdges"/>
<path d="M245.5,85.5 H250.5 M248,85.5 V91.5" stroke="#f09030" stroke-width="1.2" fill="none"/>
<!-- edge icon -->
<path d="M511,102.5 H515.5 V89.5 H519" stroke="#00e000" stroke-width="1.3" fill="none"/>
<path d="M511.5,97 L515.5,93 L519.5,97 Z" fill="#00e000"/>
<!-- DC symbol -->
<path d="M38,593.5 H48" stroke="#00e000" stroke-width="1" shape-rendering="crispEdges"/>
<path d="M39,589.5 H48" stroke="#00e000" stroke-width="1" stroke-dasharray="1.5,1.5" shape-rendering="crispEdges"/>
</svg>



<!-- scope texts -->
<div class="a" style="left:20px;top:89px;font-size:12px;color:#f00000">STOP</div>
<div class="a" style="left:554px;top:89px;font-size:13px;color:#00e000">0.00uV</div>
<div class="a" style="left:527px;top:91px;font-size:11px;color:#000;letter-spacing:-0.5px">CH1</div>
<svg width="800" height="630" viewBox="0 0 800 630">
<g fill="#ffff00" stroke="#000" stroke-width="0.25" font-family="Liberation Sans" font-size="20">
<text x="162" y="162">转换后得到的</text>
<text x="343" y="162">电平</text>
<circle cx="394" cy="155" r="9" fill="none" stroke="#ffff00" stroke-width="1.1"/><text x="390.5" y="161" font-family="Liberation Serif" font-size="14" stroke="none">1</text>
<text x="282" y="162" font-family="Liberation Serif" font-size="21">RS232</text>
</g></svg>
<div class="a" style="left:98px;top:506px;font-size:12px;color:#00e000">CH1:Vmin = -2.62V</div>
<div class="a" style="left:98px;top:532px;font-size:12px;color:#00e000">CH1:+Width = 960us</div>
<div class="a" style="left:375px;top:506px;font-size:12px;color:#00e000">CH1:Vpp = 7.31V</div>
<div class="a" style="left:375px;top:532px;font-size:12px;color:#00e000">CH1:Vmax = 4.70V</div>
<div class="a" style="left:12px;top:583px;font-size:13px;color:#000">CH1</div>
<div class="a" style="left:51px;top:583px;font-size:12.5px;color:#00e000">2.00V</div>
<div class="a" style="left:509px;top:582px;font-size:13px;color:#ffb060">Time</div>
<div class="a" style="left:548px;top:582px;font-size:13px;color:#ffb060">2.00ms</div>


<!-- right panel -->
<svg width="800" height="630" viewBox="0 0 800 630"><path d="M673,90.5 H612.5 Q609.5,90.5 609.5,93.5 V186.5 Q609.5,189.5 612.5,189.5 H788.5 Q791.5,189.5 791.5,186.5 V93.5 Q791.5,90.5 788.5,90.5 H727M673,202.5 H612.5 Q609.5,202.5 609.5,205.5 V420.5 Q609.5,423.5 612.5,423.5 H788.5 Q791.5,423.5 791.5,420.5 V205.5 Q791.5,202.5 788.5,202.5 H727M673,437.5 H612.5 Q609.5,437.5 609.5,440.5 V600.5 Q609.5,603.5 612.5,603.5 H788.5 Q791.5,603.5 791.5,600.5 V440.5 Q791.5,437.5 788.5,437.5 H727" fill="none" stroke="#d0d0c4" stroke-width="1"/></svg>


<div class="a gtitle" style="left:677px;top:82px">水平设置</div>
<div class="a lbl" style="left:620px;top:95px">秒/格</div>
<div class="a combo" style="left:618px;top:114px;width:63px;height:22px"><div class="tx">2.00ms</div><div class="bt"><svg class="chv" width="15" height="18" viewBox="0 0 15 18"><path d="M3.5,6.5 L7.5,10.5 L11.5,6.5" stroke="#4d5a80" stroke-width="2.3" fill="none"/></svg></div></div>
<div class="a lbl" style="left:620px;top:143px">时基</div>
<div class="a combo dis" style="left:618px;top:160px;width:63px;height:22px"><div class="tx">Y - T</div><div class="bt"><svg class="chv" width="15" height="18" viewBox="0 0 15 18"><path d="M3.5,6.5 L7.5,10.5 L11.5,6.5" stroke="#4d5a80" stroke-width="2.3" fill="none"/></svg></div></div>


<div class="a gtitle" style="left:677px;top:194px">垂直设置</div>
<div class="a chk" style="left:618px;top:214px"><svg width="11" height="11" style="left:0;top:0"><path d="M2,5 L4.5,8 L9,2.5" stroke="#21a121" stroke-width="2" fill="none"/></svg></div>
<div class="a lbl2" style="left:634px;top:214px">CH1</div>
<div class="a combo" style="left:618px;top:232px;width:60px;height:22px"><div class="tx">2.00V</div><div class="bt"><svg class="chv" width="15" height="18" viewBox="0 0 15 18"><path d="M3.5,6.5 L7.5,10.5 L11.5,6.5" stroke="#4d5a80" stroke-width="2.3" fill="none"/></svg></div></div>
<div class="a combo" style="left:618px;top:260px;width:60px;height:22px"><div class="tx" style="top:3px">直流</div><div class="bt"><svg class="chv" width="15" height="18" viewBox="0 0 15 18"><path d="M3.5,6.5 L7.5,10.5 L11.5,6.5" stroke="#4d5a80" stroke-width="2.3" fill="none"/></svg></div></div>
<div class="a combo" style="left:618px;top:288px;width:60px;height:22px"><div class="tx">x 10</div><div class="bt"><svg class="chv" width="15" height="18" viewBox="0 0 15 18"><path d="M3.5,6.5 L7.5,10.5 L11.5,6.5" stroke="#4d5a80" stroke-width="2.3" fill="none"/></svg></div></div>
<div class="a chk" style="left:618px;top:321px"></div>
<div class="a lbl2" style="left:634px;top:321px">CH2</div>
<div class="a combo dis" style="left:618px;top:339px;width:60px;height:22px"><div class="tx">10.0V</div><div class="bt"><svg class="chv" width="15" height="18" viewBox="0 0 15 18"><path d="M3.5,6.5 L7.5,10.5 L11.5,6.5" stroke="#4d5a80" stroke-width="2.3" fill="none"/></svg></div></div>
<div class="a combo dis" style="left:618px;top:366px;width:60px;height:22px"><div class="tx" style="top:3px">交流</div><div class="bt"><svg class="chv" width="15" height="18" viewBox="0 0 15 18"><path d="M3.5,6.5 L7.5,10.5 L11.5,6.5" stroke="#4d5a80" stroke-width="2.3" fill="none"/></svg></div></div>
<div class="a combo dis" style="left:618px;top:394px;width:60px;height:22px"><div class="tx">x 10</div><div class="bt"><svg class="chv" width="15" height="18" viewBox="0 0 15 18"><path d="M3.5,6.5 L7.5,10.5 L11.5,6.5" stroke="#4d5a80" stroke-width="2.3" fill="none"/></svg></div></div>


<div class="a gtitle" style="left:677px;top:428px">触发设置</div>
<div class="a lbl" style="left:617px;top:455px">触发模式</div>
<div class="a lbl" style="left:617px;top:485px">触发方式</div>
<div class="a lbl" style="left:617px;top:515px">触发信源</div>
<div class="a lbl" style="left:617px;top:545px">边沿类型</div>
<div class="a lbl" style="left:617px;top:575px;color:#aca899">脉宽条件 直</div>
<div class="a combo" style="left:711px;top:454px;width:62px;height:22px"><div class="sel"></div><div class="tx" style="top:3px;color:#fff">边沿</div><div class="bt"><svg class="chv" width="15" height="18" viewBox="0 0 15 18"><path d="M3.5,6.5 L7.5,10.5 L11.5,6.5" stroke="#4d5a80" stroke-width="2.3" fill="none"/></svg></div></div>
<div class="a combo" style="left:711px;top:484px;width:62px;height:22px"><div class="tx" style="top:3px">普通</div><div class="bt"><svg class="chv" width="15" height="18" viewBox="0 0 15 18"><path d="M3.5,6.5 L7.5,10.5 L11.5,6.5" stroke="#4d5a80" stroke-width="2.3" fill="none"/></svg></div></div>
<div class="a combo" style="left:711px;top:513px;width:62px;height:22px"><div class="tx">CH1</div><div class="bt"><svg class="chv" width="15" height="18" viewBox="0 0 15 18"><path d="M3.5,6.5 L7.5,10.5 L11.5,6.5" stroke="#4d5a80" stroke-width="2.3" fill="none"/></svg></div></div>
<div class="a combo" style="left:711px;top:543px;width:62px;height:22px"><div class="tx">+</div><div class="bt"><svg class="chv" width="15" height="18" viewBox="0 0 15 18"><path d="M3.5,6.5 L7.5,10.5 L11.5,6.5" stroke="#4d5a80" stroke-width="2.3" fill="none"/></svg></div></div>

<svg width="800" height="630" viewBox="0 0 800 630">
<defs>
<pattern id="kb" patternUnits="userSpaceOnUse" width="8" height="8"><rect x="4" y="3" width="1" height="1" fill="#0000f0"/><rect x="0" y="7" width="1" height="1" fill="#0000f0"/></pattern>
<pattern id="kg" patternUnits="userSpaceOnUse" width="4" height="4"><rect x="1" y="1" width="1" height="1" fill="#b8c0d0"/></pattern>
</defs>
<path d="M716.97,171.34A36.6,36.6 0 1 1 762.03,171.34" fill="none" stroke="#000" stroke-width="1.3"/>
<path d="M717.83,170.24A35.2,35.2 0 1 1 761.17,170.24" fill="none" stroke="#fff" stroke-width="1.5"/>
<path d="M718.81,168.98A33.6,33.6 0 1 1 760.19,168.98" fill="none" stroke="#000" stroke-width="1.3"/>
<circle cx="739.5" cy="142.5" r="30.75" fill="none" stroke="#a9a9a9" stroke-width="4.5"/>
<path d="M717.76,164.24A30.75,30.75 0 0 1 761.24,120.76" fill="none" stroke="#d4d4d0" stroke-width="4.5"/>
<path d="M760.19,168.98A33.6,33.6 0 0 1 718.81,168.98" fill="none" stroke="#000" stroke-width="1.2"/>
<circle cx="739.5" cy="142.5" r="28" fill="#3830f6" stroke="#000" stroke-width="1.1"/>
<circle cx="739.5" cy="142.5" r="27.4" fill="url(#kb)"/>
<path d="M715.5,165.5L708.0,173.0M763.5,165.5L771.0,173.0" stroke="#000" stroke-width="1.2" fill="none"/>
<path d="M743,120L741,136" stroke="#fff" stroke-width="2" stroke-linecap="square"/><path d="M716.97,297.34A36.6,36.6 0 1 1 762.03,297.34" fill="none" stroke="#000" stroke-width="1.3"/>
<path d="M717.83,296.24A35.2,35.2 0 1 1 761.17,296.24" fill="none" stroke="#fff" stroke-width="1.5"/>
<path d="M718.81,294.98A33.6,33.6 0 1 1 760.19,294.98" fill="none" stroke="#000" stroke-width="1.3"/>
<circle cx="739.5" cy="268.5" r="30.75" fill="none" stroke="#a9a9a9" stroke-width="4.5"/>
<path d="M717.76,290.24A30.75,30.75 0 0 1 761.24,246.76" fill="none" stroke="#d4d4d0" stroke-width="4.5"/>
<path d="M760.19,294.98A33.6,33.6 0 0 1 718.81,294.98" fill="none" stroke="#000" stroke-width="1.2"/>
<circle cx="739.5" cy="268.5" r="28" fill="#00ff00" stroke="#000" stroke-width="1.1"/>
<path d="M715.5,291.5L708.0,299.0M763.5,291.5L771.0,299.0" stroke="#000" stroke-width="1.2" fill="none"/>
<path d="M747,247L741.5,262" stroke="#fff" stroke-width="2" stroke-linecap="square"/><path d="M716.97,402.34A36.6,36.6 0 1 1 762.03,402.34" fill="none" stroke="#000" stroke-width="1.3"/>
<path d="M717.83,401.24A35.2,35.2 0 1 1 761.17,401.24" fill="none" stroke="#fff" stroke-width="1.5"/>
<path d="M718.81,399.98A33.6,33.6 0 1 1 760.19,399.98" fill="none" stroke="#000" stroke-width="1.3"/>
<circle cx="739.5" cy="373.5" r="30.75" fill="none" stroke="#a9a9a9" stroke-width="4.5"/>
<path d="M717.76,395.24A30.75,30.75 0 0 1 761.24,351.76" fill="none" stroke="#d4d4d0" stroke-width="4.5"/>
<path d="M760.19,399.98A33.6,33.6 0 0 1 718.81,399.98" fill="none" stroke="#000" stroke-width="1.2"/>
<circle cx="739.5" cy="373.5" r="28" fill="#a0a0a4" stroke="#000" stroke-width="1.1"/>
<circle cx="739.5" cy="373.5" r="27.4" fill="url(#kg)"/>
<path d="M715.5,396.5L708.0,404.0M763.5,396.5L771.0,404.0" stroke="#000" stroke-width="1.2" fill="none"/>
<path d="M725,357L735,368" stroke="#fff" stroke-width="2" stroke-linecap="square"/>
</svg>

<!-- watermark -->
<svg width="800" height="630" viewBox="0 0 800 630">
<g font-family="Liberation Sans" font-weight="900">
<text x="634" y="598" font-size="30" textLength="156" lengthAdjust="spacingAndGlyphs" fill="#fff" stroke="#fff" stroke-width="5" stroke-linejoin="round">矿石收音机</text>
<text x="634" y="598" font-size="30" textLength="156" lengthAdjust="spacingAndGlyphs" fill="#1b3b78" stroke="#1b3b78" stroke-width="1.6" stroke-linejoin="round">矿石收音机</text>
</g>
<g font-family="Liberation Sans" font-weight="bold">
<text x="635" y="623" font-size="16" textLength="156" lengthAdjust="spacingAndGlyphs" fill="#fff" stroke="#fff" stroke-width="3" stroke-linejoin="round">www.crystalradio.cn</text>
<text x="635" y="623" font-size="16" textLength="156" lengthAdjust="spacingAndGlyphs" fill="#1e3c78" stroke="#1e3c78" stroke-width="0.5">www.crystalradio.cn</text>
</g>
</svg>

<!-- status -->
<div class="a" style="left:7px;top:609px;font-size:12px">已连接</div>
<div class="a" style="left:350px;top:613px;font-size:10px;font-family:'Liberation Mono',monospace;transform:scaleY(1.15);transform-origin:0 0">Volt = 4.425 V</div>
</body></html>
